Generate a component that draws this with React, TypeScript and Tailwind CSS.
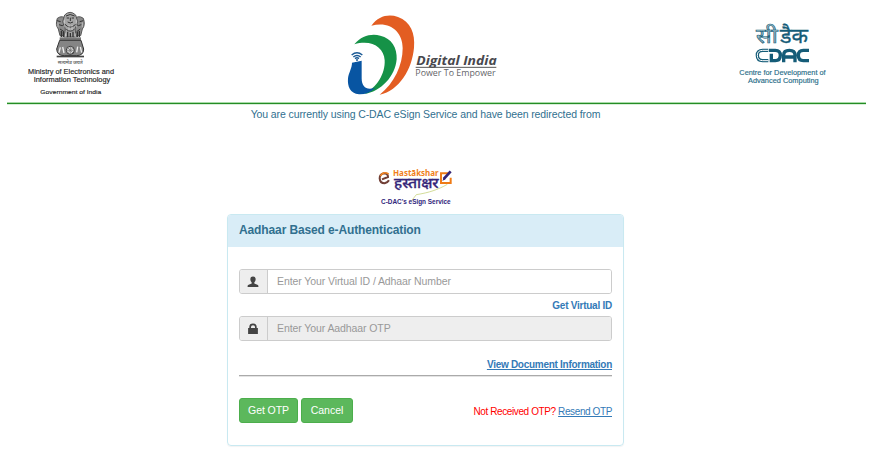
import type { ReactNode } from "react";

const sans = "font-['Liberation_Sans',Arial,sans-serif]";

function Emblem() {
  return (
    <svg viewBox="0 0 315 285" className="block h-[95px] w-[105px]" fontFamily="'Liberation Sans', Arial, sans-serif">
      <g fill="#8a8a8a" stroke="#555" strokeWidth="3">
        <path d="M112 40Q105 60 115 72L120 92H140L142 45Q128 28 112 40Z" />
        <path d="M190 40Q197 60 187 72L182 92H162L160 45Q174 28 190 40Z" />
        <path d="M134 30Q150 14 167 30L173 50L165 72L169 96H132L136 72L128 50Z" fill="#a5a5a5" />
      </g>
      <g fill="none" stroke="#333" strokeWidth="3">
        <path d="M138 33Q150 24 164 33M140 39H147M155 39H162M151 38V48M143 51Q151 57 159 51M135 58Q150 75 167 58M139 73Q151 84 163 73" />
        <path d="M111 47L122 50M117 59Q128 66 134 57M120 72L132 80M190 47L179 50M184 59Q174 66 168 57M181 72L170 80" />
        <path d="M124 78V96M130 80V96M143 80V97M151 84V97M159 80V97M172 80V96M178 78V96" strokeWidth="4" />
      </g>
      <g stroke="#eee" strokeWidth="2" opacity=".75"><path d="M133 44V67M169 44V67M147 60V76M156 60V76M114 52V67M187 52V67M136 85V112M166 85V112M147 96V112M157 96V112" /></g>
      <path d="M119 97H183V106H119Z" fill="#777" />
      <path d="M119 106H183L191 132Q191 152 169 152H133Q111 152 110 132Z" fill="#858585" stroke="#333" strokeWidth="3" />
      <circle cx="151" cy="136" r="12" fill="#ddd" stroke="#333" strokeWidth="3" />
      <path d="M151 125V147M140 136H162M143 128L159 144M159 128L143 144" stroke="#666" strokeWidth="2" />
      <path d="M121 127L117 143M128 126L132 144M173 125L170 142M181 126L185 143" stroke="#eee" strokeWidth="4" />
      <path d="M110 152H192V157H110Z" fill="#444" />
      <text x="151" y="178" fontSize="16" fontWeight="600" textAnchor="middle" textLength="75" lengthAdjust="spacingAndGlyphs" fill="#666" fontFamily="'Noto Sans', 'Noto Sans Devanagari', sans-serif">सत्यमेव जयते</text>
      <g fill="#222" stroke="#222" strokeWidth=".4">
        <text x="24" y="208" fontSize="20" textLength="258" lengthAdjust="spacingAndGlyphs">Ministry of Electronics and</text>
        <text x="41" y="232" fontSize="20" textLength="230" lengthAdjust="spacingAndGlyphs">Information Technology</text>
        <text x="61" y="268" fontSize="18" textLength="183" lengthAdjust="spacingAndGlyphs">Government of India</text>
      </g>
    </svg>
  );
}

function DigitalIndia() {
  return (
    <svg viewBox="0 0 495 270" className="block h-[90px] w-[165px]" fontFamily="'Open Sans', 'Noto Sans', sans-serif">
      <path d="M94 53C116 24 145 17 174 27C212 40 226 77 222 119C216 184 178 247 119 260C163 226 188 171 188 121C188 71 151 38 94 53Z" fill="#e35d22" />
      <path d="M43 109C65 83 94 76 121 83C155 91 172 119 170 154C166 204 123 252 72 258C111 239 136 197 134 157C132 118 95 94 43 109Z" fill="#159247" />
      <path d="M36 164L65 158V211C65 239 81 247 106 239C91 253 74 260 57 259C30 257 22 235 24 211C26 194 36 180 36 164Z" fill="#0855a2" />
      <g fill="none" stroke="#1b5a95" strokeWidth="4.5">
        <path d="M35 141Q51 128 67 141M40 147Q51 138 62 147M45 152Q51 147 57 152" />
      </g>
      <circle cx="51" cy="156" r="3" fill="#1b5a95" />
      <text x="229" y="172" fontSize="39" fontWeight="700" fontStyle="italic" fill="#48484d" textLength="241" lengthAdjust="spacingAndGlyphs">Digital India</text>
      <path d="M227 178H469" stroke="#555" strokeWidth="3" />
      <text x="226" y="204" fontSize="25" fill="#65656a" textLength="241" lengthAdjust="spacingAndGlyphs">Power To Empower</text>
    </svg>
  );
}

function Cdac() {
  return (
    <svg viewBox="0 0 300 240" className="block h-[80px] w-[100px]" fill="none">
      <g fontFamily="'Noto Sans', 'Noto Sans Devanagari', sans-serif" fontSize="63" stroke="#155c78">
        <text x="78" y="83" fill="#9fc1cd" strokeWidth="2" textLength="65" lengthAdjust="spacingAndGlyphs">सी</text>
        <text x="150" y="83" fill="#155c78" strokeWidth="1" textLength="84" lengthAdjust="spacingAndGlyphs">डैक</text>
      </g>
      <g stroke="#155c78" strokeWidth="10">
        <path d="M115 106H98Q82 106 82 121Q82 137 98 137H115" />
        <path d="M115 106H98Q82 106 82 121Q82 137 98 137H115" stroke="#fff" strokeWidth="3" />
        <path d="M117 106H136Q151 106 151 121Q151 137 136 137H124V116M161 142V120Q161 106 178 106Q195 106 195 120V142M161 126H195M237 106H220Q205 106 205 121Q205 137 220 137H237" />
      </g>
      <g fontFamily="'Liberation Sans', Arial, sans-serif" fontSize="20" fill="#286d88" stroke="#286d88" strokeWidth=".4">
        <text x="28" y="181" textLength="259" lengthAdjust="spacingAndGlyphs">Centre for Development of</text>
        <text x="54" y="205" textLength="212" lengthAdjust="spacingAndGlyphs">Advanced Computing</text>
      </g>
    </svg>
  );
}

function Hastakshar() {
  return (
    <svg viewBox="0 0 270 135" className="block h-[45px] w-[90px]" fill="none">
      <path d="M36 43L54 36Q54 25 42 25Q29 27 29 40Q30 55 44 55Q53 53 57 46" stroke="#713f36" strokeWidth="6" />
      <path d="M31 33Q40 17 56 27" stroke="#ef8526" strokeWidth="5" />
      <text x="69" y="34" fontFamily="'Noto Sans', sans-serif" fontSize="25" fontWeight="700" fill="#f07f1d" textLength="137" lengthAdjust="spacingAndGlyphs">Hastākshar</text>
      <text x="72" y="69" fontFamily="'Noto Sans', 'Noto Sans Devanagari', sans-serif" fontSize="45" fontWeight="500" fill="#352679" stroke="#352679" strokeWidth="1" textLength="134" lengthAdjust="spacingAndGlyphs">हस्ताक्षर</text>
      <path d="M237 25H213V54H242V38" stroke="#ef7b16" strokeWidth="6" />
      <path d="M221 42L242 19" stroke="#342575" strokeWidth="8" />
      <path d="M217 48L221 38L226 43Z" fill="#342575" />
      <path d="M232 58C204 74 177 83 139 89L124 108" stroke="#bdca63" strokeWidth="2" />
      <text x="33" y="117" fontFamily="'Liberation Sans', Arial, sans-serif" fontSize="21" fontWeight="700" fill="#30257b" textLength="209" lengthAdjust="spacingAndGlyphs">C-DAC's eSign Service</text>
    </svg>
  );
}

function UserIcon() {
  return (
    <svg viewBox="0 0 12 12" className="mr-px h-3 w-3" fill="#444">
      <path d="M6 .6C8.2.6 8.8 2 8.6 3.8C8.5 5 8 5.8 7.3 6.4V7.5C8.6 8.2 11.2 8.7 11.4 9.8V11H.6V9.8C.8 8.7 3.4 8.2 4.7 7.5V6.4C4 5.8 3.5 5 3.4 3.8C3.2 2 3.8.6 6 .6Z" />
    </svg>
  );
}

function LockIcon() {
  return (
    <svg viewBox="0 0 12 12" className="mr-px h-3 w-3" fill="#444">
      <path d="M1.1 5H2.3V4Q2.3.6 6 .6Q9.7.6 9.7 4V5H10.9V11H1.1ZM4 5H8V4Q8 2.3 6 2.3Q4 2.3 4 4Z" />
    </svg>
  );
}

function Field({ icon, placeholder, disabled }: { icon: ReactNode; placeholder: string; disabled?: boolean }) {
  return (
    <div className="flex h-[25px] overflow-hidden rounded-[3px] border border-[#ccc]">
      <span className="flex w-[28px] shrink-0 items-center justify-center border-r border-[#ccc] bg-[#eee]">{icon}</span>
      <input
        disabled={disabled}
        placeholder={placeholder}
        className="min-w-0 flex-1 bg-white px-[9px] text-[10.5px] tracking-[-0.09px] outline-none placeholder:text-[#999] disabled:bg-[#eee]"
      />
    </div>
  );
}

export default function App() {
  return (
    <div className={`h-[458px] w-[876px] overflow-hidden bg-white ${sans}`}>
      <header className="mr-[10px] ml-[7px] flex h-[104px] items-start justify-between border-b border-[#258c25] pt-[5px] shadow-[inset_0_-1px_0_#a9dba9,0_1px_0_#d9efd9]">
        <div className="w-[105px] pl-[13px]"><Emblem /></div>
        <div className="ml-[2px] pt-[3px]"><DigitalIndia /></div>
        <div className="mr-[36px] pt-[10px]"><Cdac /></div>
      </header>
      <p className="mt-[2px] h-4 pr-[25px] text-center text-[10.5px] leading-4 tracking-[-0.097px] text-[#31708f]">
        You are currently using C-DAC eSign Service and have been redirected from
      </p>
      <div className="mt-[43px] ml-[370px] h-[45px]"><Hastakshar /></div>
      <main className="mt-[4px] ml-[227px] h-[232px] w-[397px] rounded-[4px] border border-[#c9e9f1] shadow-[0_1px_1px_rgba(0,0,0,.05)]">
        <h1 className="flex h-8 items-center rounded-t-[3px] bg-[#d9edf7] px-[11px] pb-[3px] text-[12px] font-bold tracking-[-0.12px] text-[#31708f]">
          Aadhaar Based e-Authentication
        </h1>
        <form className="px-[11px] pt-[22px]">
          <Field icon={<UserIcon />} placeholder="Enter Your Virtual ID / Adhaar Number" />
          <div className="flex h-[22px] items-center justify-end text-[10px] font-bold tracking-[-0.25px] text-[#337ab7]"><a>Get Virtual ID</a></div>
          <Field icon={<LockIcon />} placeholder="Enter Your Aadhaar OTP" disabled />
          <div className="mt-[15px] flex h-5 items-center justify-end border-b border-[#aaa] pb-[3px] text-[10px] font-bold tracking-[-0.28px] text-[#337ab7] underline shadow-[0_1px_0_#e4e4e4]"><a>View Document Information</a></div>
          <div className="mt-[22px] flex items-center justify-between">
            <div className="flex gap-[3px]">
              <button type="button" className="h-[25px] w-[59px] rounded-[3px] border border-[#4cae4c] bg-[#5cb85c] text-[10.5px] tracking-[-0.09px] text-white">Get OTP</button>
              <button type="button" className="h-[25px] w-[52px] rounded-[3px] border border-[#4cae4c] bg-[#5cb85c] text-[10.5px] text-white">Cancel</button>
            </div>
            <span className="pt-[2px] text-[10px] tracking-[-0.39px] text-[#ff0000]">Not Received OTP? <a className="text-[#337ab7] underline">Resend OTP</a></span>
          </div>
        </form>
      </main>
    </div>
  );
}
